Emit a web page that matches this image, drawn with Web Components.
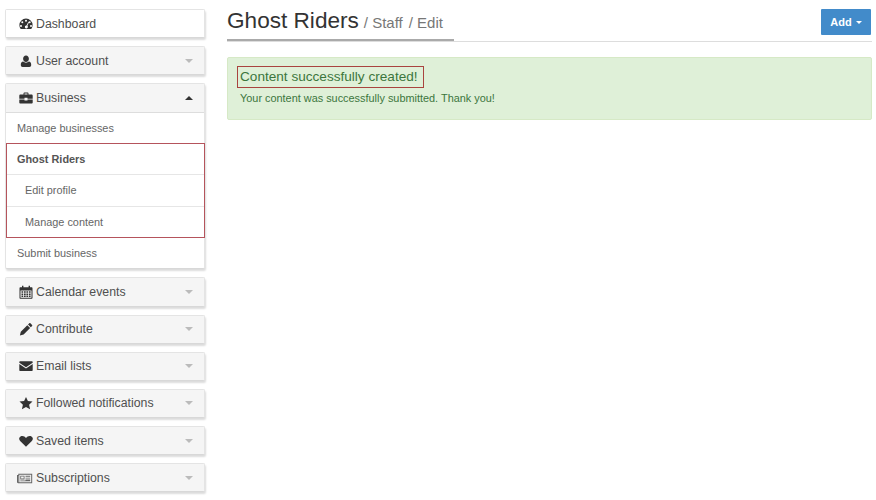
<!DOCTYPE html>
<html>
<head>
<meta charset="utf-8">
<title>Ghost Riders</title>
<style>
  html, body { margin: 0; background: #fff; }
  body { font-family: "Liberation Sans", Arial, sans-serif; color: #333; overflow: hidden; }
</style>
</head>
<body>
<app-shell>
  <side-panel slot="side" label="Dashboard" icon="dashboard" plain></side-panel>
  <side-panel slot="side" label="User account" icon="user"></side-panel>
  <side-panel slot="side" label="Business" icon="briefcase" open>
    <side-link>Manage businesses</side-link>
    <side-group>
      <side-link strong>Ghost Riders</side-link>
      <side-link nested>Edit profile</side-link>
      <side-link nested>Manage content</side-link>
    </side-group>
    <side-link>Submit business</side-link>
  </side-panel>
  <side-panel slot="side" label="Calendar events" icon="calendar"></side-panel>
  <side-panel slot="side" label="Contribute" icon="pencil"></side-panel>
  <side-panel slot="side" label="Email lists" icon="envelope"></side-panel>
  <side-panel slot="side" label="Followed notifications" icon="star"></side-panel>
  <side-panel slot="side" label="Saved items" icon="heart"></side-panel>
  <side-panel slot="side" label="Subscriptions" icon="news"></side-panel>

  <page-header title="Ghost Riders" crumbs="/ Staff|/ Edit"></page-header>
  <success-alert heading="Content successfully created!">Your content was successfully submitted. Thank you!</success-alert>
</app-shell>

<script>
  const ICONS = {
    dashboard: '<path fill-rule="evenodd" d="M7 1.5a6.6 6.6 0 0 0-6.6 6.6c0 1.5.5 2.9 1.3 4h10.600a6.600 6.600 0 0 0 1.300-4A6.600 6.600 0 0 0 7 1.500zM7 2.700a1 1 0 1 1 0 2 1 1 0 0 1 0-2zM3.300 4.300a1 1 0 1 1 0 2 1 1 0 0 1 0-2zM10.700 4.300a1 1 0 1 1 0 2 1 1 0 0 1 0-2zM2 8.100a1 1 0 1 1 0 2 1 1 0 0 1 0-2zM12 8.100a1 1 0 1 1 0 2 1 1 0 0 1 0-2zM9.400 4.700l.7.400-1.700 3.700a1.500 1.500 0 1 1-.9-.4z"/>',
    user: '<path d="M7 1.500c1.700 0 2.900 1.400 2.900 3.200S8.700 8 7 8 4.100 6.500 4.100 4.700 5.300 1.500 7 1.500zM4.300 7.500C5 8.200 6 8.700 7 8.700s2-.5 2.700-1.200c1.800.1 2.500 1.500 2.500 3.500 0 1.200-.7 1.900-1.800 1.900H3.600c-1.100 0-1.800-.7-1.800-1.900 0-2 .7-3.400 2.500-3.500z"/>',
    briefcase: '<path fill-rule="evenodd" d="M4.500 3.600V2.500c0-.5.400-.9.900-.9h3.200c.5 0 .9.400.9.900v1.100h3c.7 0 1.200.5 1.200 1.200v2.900H8.500v-.9h-3v.9H.3V4.800c0-.7.500-1.200 1.200-1.200zM5.500 3.600h3v-1h-3zM.3 8.500h5.200v1.100h3V8.500h5.200v2.900c0 .7-.5 1.200-1.200 1.200h-11c-.7 0-1.200-.5-1.200-1.200z"/>',
    calendar: '<path fill-rule="evenodd" d="M3 .8h1.400v1.500h5.200V.8H11v1.500h1.500c.6 0 1 .4 1 1v9.400c0 .6-.4 1-1 1h-11c-.6 0-1-.4-1-1V3.300c0-.6.400-1 1-1H3zM1.500 5.400v7.300h11V5.400zM2.500 6.300h1.700v1.500H2.500zM5 6.300h1.700v1.500H5zM7.400 6.300h1.700v1.500H7.400zM9.900 6.300h1.700v1.500H9.900zM2.500 8.400h1.700v1.500H2.500zM5 8.400h1.700v1.500H5zM7.400 8.400h1.700v1.500H7.400zM9.900 8.400h1.700v1.500H9.900zM2.500 10.500h1.700V12H2.500zM5 10.500h1.700V12H5zM7.400 10.500h1.700V12H7.400zM9.900 10.500h1.700V12H9.900z"/>',
    pencil: '<path d="M10.300 1.200c.3-.3.800-.3 1.100 0l1.700 1.700c.3.300.3.800 0 1.100l-1.300 1.300-2.800-2.800zM8.300 3.200l2.800 2.800-6.500 6.500-3.700.9.900-3.700z"/>',
    envelope: '<path d="M1.300 2.300h11.400c.6 0 1 .4 1 1v.4L7 8.200.3 3.700v-.4c0-.6.400-1 1-1zM.3 5.100 7 9.600l6.700-4.500v6c0 .6-.4 1-1 1H1.300c-.6 0-1-.4-1-1z"/>',
    star: '<path d="m7 .9 1.900 4.200 4.600.5-3.400 3.100 1 4.500-4.100-2.300-4.100 2.300 1-4.500L.5 5.600l4.600-.5z"/>',
    heart: '<path d="M7 12.800 1.400 7.300C.2 6.100-.1 4.900.4 3.700 1 2.500 2 1.900 3.300 1.900c1.500 0 2.800.8 3.700 2.200.9-1.400 2.200-2.200 3.700-2.200 1.300 0 2.300.6 2.900 1.800.5 1.200.2 2.400-1 3.600z"/>',
    news: '<path fill-rule="evenodd" d="M1.300 2.700h13.900v9.600H1.200C.500 12.300 0 11.800 0 11.100V4h1.300zM1 4.800V11c0 .2.100.3.300.3V4.800zM2.300 3.700v7.600h11.900V3.700zM3.300 4.800h4.200v3.600H3.300zM4.100 5.600v2h2.600v-2zM8.500 4.800h4.700v.9H8.500zM8.500 6.700h4.700v.9H8.500zM8.500 8.600h4.700v.8H8.500zM3.300 9.400h9.900v.8H3.300z"/>'
  }

  customElements.define('app-shell',
    /**
     * Two columns, the menu on the left and the page content on the right.
     */
    class extends HTMLElement {
      constructor () {
        super()
        this.attachShadow({ mode: 'open' })
        this.shadowRoot.innerHTML = `
        <style>
        :host {
          display: grid;
          grid-template-columns: 200px 645px;
          column-gap: 22px;
          padding: 9px 0 0 5px;
          height: 500px;
          box-sizing: border-box;
          overflow: hidden;
        }
        .side {
          display: flex;
          flex-direction: column;
          gap: 8px;
        }
        </style>
        <div class="side"><slot name="side"></slot></div>
        <div class="main"><slot></slot></div>
      `
      }
    })

  customElements.define('side-panel',
    /**
     * One block of the menu. The heading may have a caret and a list below it.
     */
    class extends HTMLElement {
      constructor () {
        super()
        this.attachShadow({ mode: 'open' })
      }

      connectedCallback () {
        const plain = this.hasAttribute('plain')
        const open = this.hasAttribute('open')
        const icon = this.getAttribute('icon')
        const width = icon === 'news' ? 16 : 14
        this.shadowRoot.innerHTML = `
        <style>
        :host {
          display: block;
          background: #fff;
          border: 1px solid #e4e4e4;
          border-bottom-color: #d8d8d8;
          border-radius: 2px;
          box-shadow: 1px 2px 2px rgba(0, 0, 0, .14);
        }
        .head {
          display: flex;
          align-items: center;
          height: 27.2px;
          padding: 0 11px 0 13px;
          background: ${plain ? '#fff' : '#f5f5f5'};
          font-size: 12.3px;
          color: #505050;
        }
        .head svg {
          width: ${width}px;
          height: 14px;
          margin-right: 3px;
          margin-left: ${icon === 'news' ? -2 : 0}px;
          fill: ${icon === 'news' ? '#666' : '#333'};
          flex: none;
        }
        .label {
          flex: 1;
        }
        .caret {
          width: 0;
          height: 0;
          border-left: 4px solid transparent;
          border-right: 4px solid transparent;
          border-top: 4px solid #bbb;
        }
        .caret.up {
          border-top: 0;
          border-bottom: 4px solid #333;
        }
        .list {
          border-top: 1px solid #ddd;
        }
        </style>
        <div class="head">
          <svg viewBox="0 0 ${width} 14">${ICONS[icon]}</svg>
          <span class="label">${this.getAttribute('label')}</span>
          ${plain ? '' : `<span class="caret ${open ? 'up' : ''}"></span>`}
        </div>
        ${open ? '<div class="list"><slot></slot></div>' : ''}
      `
      }
    })

  customElements.define('side-group',
    /**
     * The outlined group of links inside the menu.
     */
    class extends HTMLElement {
      constructor () {
        super()
        this.attachShadow({ mode: 'open' })
        this.shadowRoot.innerHTML = `
        <style>
        :host {
          display: block;
          margin: -1px -1px 0 0;
          border: 1px solid #b5545c;
        }
        </style>
        <slot></slot>
      `
      }
    })

  customElements.define('side-link',
    /**
     * A row of the open menu list.
     */
    class extends HTMLElement {
      constructor () {
        super()
        this.attachShadow({ mode: 'open' })
        this.shadowRoot.innerHTML = `
        <style>
        :host {
          display: flex;
          align-items: center;
          height: 30.2px;
          padding-left: 11px;
          border-bottom: 1px solid #e6e6e6;
          font-size: 10.9px;
          color: #666;
        }
        :host(:last-child) {
          border-bottom: 0;
        }
        :host([strong]) {
          font-weight: bold;
          color: #555;
          padding-left: 10px;
        }
        :host([nested]) {
          padding-left: 18px;
          height: 30.6px;
        }
        </style>
        <slot></slot>
      `
      }
    })

  customElements.define('page-header',
    /**
     * Title, breadcrumb text and the Add button above a two part rule.
     */
    class extends HTMLElement {
      constructor () {
        super()
        this.attachShadow({ mode: 'open' })
      }

      connectedCallback () {
        const crumbs = this.getAttribute('crumbs').split('|')
        this.shadowRoot.innerHTML = `
        <style>
        :host {
          display: flex;
          align-items: flex-start;
          justify-content: space-between;
          height: 32px;
          border-bottom: 1px solid #ddd;
        }
        .title {
          display: flex;
          align-items: baseline;
          height: 31px;
          margin-top: -1px;
          padding-right: 11px;
          border-bottom: 2px solid #aaa;
          margin-bottom: -1px;
          font-size: 22.6px;
          color: #333;
        }
        .crumb {
          font-size: 15px;
          color: #777;
          margin-left: 5px;
        }
        .crumb + .crumb {
          margin-left: 6px;
        }
        .add {
          display: flex;
          align-items: center;
          gap: 4px;
          height: 26px;
          width: 50px;
          box-sizing: border-box;
          justify-content: center;
          margin-right: 1px;
          background: #428bca;
          border-radius: 1px;
          color: #fff;
          font-size: 11px;
          font-weight: bold;
        }
        .add i {
          width: 0;
          height: 0;
          border-left: 3px solid transparent;
          border-right: 3px solid transparent;
          border-top: 3px solid #fff;
        }
        </style>
        <div class="title">
          <span>${this.getAttribute('title')}</span>
          ${crumbs.map(c => `<span class="crumb">${c}</span>`).join('')}
        </div>
        <div class="add">Add <i></i></div>
      `
      }
    })

  customElements.define('success-alert',
    /**
     * Green message box with an outlined heading.
     */
    class extends HTMLElement {
      constructor () {
        super()
        this.attachShadow({ mode: 'open' })
      }

      connectedCallback () {
        this.shadowRoot.innerHTML = `
        <style>
        :host {
          display: block;
          height: 63px;
          margin-top: 15px;
          padding: 8px 9px 0;
          box-sizing: border-box;
          background: #dff0d8;
          border: 1px solid #d6e9c6;
          border-radius: 2px;
          color: #3c763d;
        }
        .heading {
          display: inline-flex;
          align-items: center;
          height: 18px;
          padding: 0 5px 2px 2px;
          border: 1px solid #a9443f;
          font-size: 13.6px;
        }
        p {
          margin: 4px 0 0 3px;
          font-size: 10.9px;
        }
        </style>
        <div class="heading">${this.getAttribute('heading')}</div>
        <p><slot></slot></p>
      `
      }
    })
</script>
</body>
</html>
